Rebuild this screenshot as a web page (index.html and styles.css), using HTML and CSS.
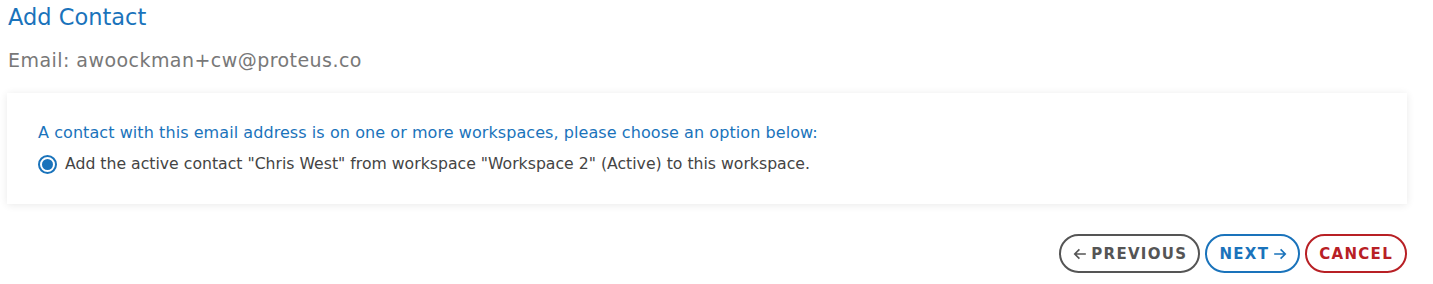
FILE: index.html
```html
<!DOCTYPE html>
<html lang="en">
<head>
  <meta charset="UTF-8" />
  <title>Add Contact</title>
  <link rel="stylesheet" href="styles.css">
</head>
<body>
  <div class="page">
    <h1 class="title">Add Contact</h1>
    <div class="email">Email: awoockman+cw@proteus.co</div>

    <div class="card">
      <p class="prompt">A contact with this email address is on one or more workspaces, please choose an option below:</p>
      <label class="option">
        <input type="radio" name="choice" checked>
        <span class="radio"></span>
        <span>Add the active contact "Chris West" from workspace "Workspace 2" (Active) to this workspace.</span>
      </label>
    </div>

    <div class="actions">
      <button class="btn prev">
        <svg class="arrow" viewBox="0 0 12 12"><path d="M11 6H1.5M5.5 2L1.5 6l4 4" /></svg>
        Previous
      </button>
      <button class="btn next">
        Next
        <svg class="arrow" viewBox="0 0 12 12"><path d="M1 6h9.5M6.5 2l4 4-4 4" /></svg>
      </button>
      <button class="btn cancel">Cancel</button>
    </div>
  </div>
</body>
</html>
```

FILE: styles.css
```css
* { box-sizing: border-box; }
body { margin: 0; background: #fff; font-family: "DejaVu Sans", "Open Sans", sans-serif; }
.page { padding: 3px 26px 0 7px; }
.title { margin: 0; font-size: 22.5px; font-weight: 400; color: #1a73bb; line-height: 28px; padding-left: 1px; }
.email { margin-top: 18px; font-size: 19px; letter-spacing: 0.45px; color: #787878; line-height: 22px; padding-left: 1px; }
.card { margin-top: 22px; background: #fff; box-shadow: 0 1px 8px rgba(0,0,0,0.09); padding: 30px 30px 30px 31px; }
.prompt { margin: 0; font-size: 16px; letter-spacing: 0.07px; color: #1a73bb; line-height: 20px; }
.option { display: flex; align-items: center; gap: 8px; margin-top: 11px; font-size: 15.7px; color: #444; line-height: 20px; }
.option input { display: none; }
.radio { flex: none; width: 19px; height: 19px; border: 2px solid #1a73bb; border-radius: 50%; display: flex; align-items: center; justify-content: center; }
.radio::after { content: ""; width: 11px; height: 11px; border-radius: 50%; background: #1a73bb; }
.actions { display: flex; justify-content: flex-end; gap: 5px; margin-top: 30px; }
.btn { display: flex; align-items: center; gap: 4px; height: 39px; padding: 0 12px; border-radius: 20px; background: #fff; border: 2px solid; font-family: inherit; font-size: 15px; font-weight: 700; text-transform: uppercase; letter-spacing: 1.3px; }
.arrow { width: 14px; height: 14px; fill: none; stroke: currentColor; stroke-width: 1.4; }
.prev { color: #555; border-color: #555; padding-right: 11px; }
.next { color: #1a73bb; border-color: #1a73bb; padding-right: 11px; }
.cancel { color: #b82025; border-color: #b82025; }
```
